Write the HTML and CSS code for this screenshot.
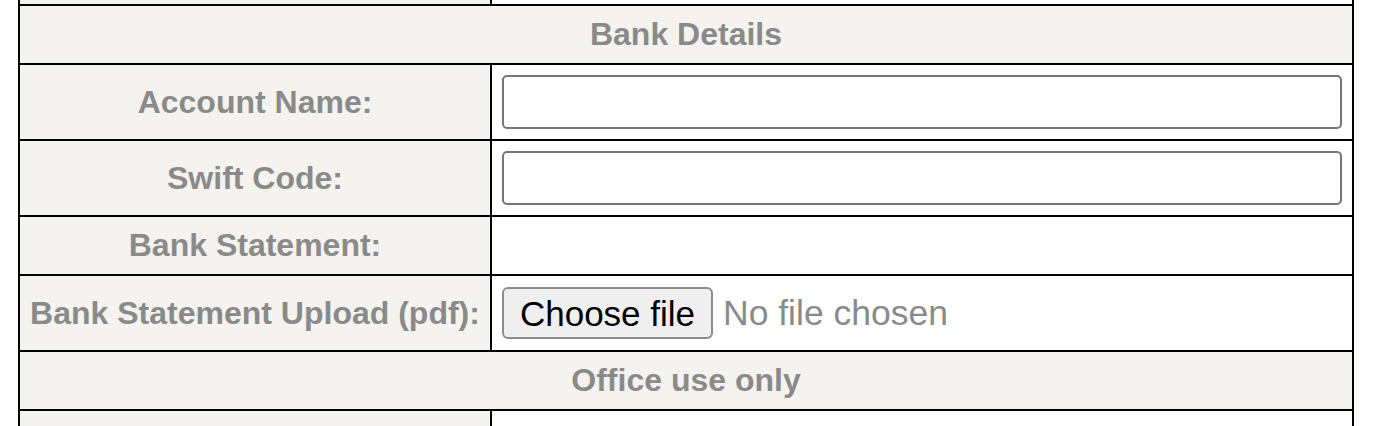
FILE: index.html
```html
<!DOCTYPE html>
<html>
<head>
<meta charset="utf-8">
<link rel="stylesheet" href="styles.css">
</head>
<body>
<div class="page">
  <div class="form-grid">
    <div class="cell label"></div>
    <div class="cell value"></div>

    <div class="cell section">Bank Details</div>

    <div class="cell label">Account Name:</div>
    <div class="cell value"><input class="text-input" type="text"></div>

    <div class="cell label">Swift Code:</div>
    <div class="cell value"><input class="text-input" type="text"></div>

    <div class="cell label">Bank Statement:</div>
    <div class="cell value"></div>

    <div class="cell label">Bank Statement Upload (pdf):</div>
    <div class="cell value">
      <div class="file-input">
        <button class="file-button" type="button">Choose file</button>
        <span class="file-status">No file chosen</span>
      </div>
    </div>

    <div class="cell section">Office use only</div>

    <div class="cell label"></div>
    <div class="cell value"></div>
  </div>
</div>
</body>
</html>
```

FILE: styles.css
```css
html, body {
  margin: 0;
  padding: 0;
  background: #ffffff;
  overflow: hidden;
}

.page {
  padding-left: 18px;
  height: 426px;
  overflow: hidden;
}

.form-grid {
  display: grid;
  grid-template-columns: 470px 860px;
  grid-template-rows: 4px 57px 74px 74px 57px 74px 57px 57px;
  gap: 2px;
  padding: 0 2px;
  width: 1332px;
  background: #000000;
  font-family: "Liberation Sans", Arial, Helvetica, sans-serif;
}

.cell {
  display: flex;
  align-items: center;
  box-sizing: border-box;
  min-height: 0;
  overflow: hidden;
}

.label {
  background: #f4f3ef;
  color: #8a8a8a;
  font-weight: bold;
  font-size: 32px;
  justify-content: center;
  text-align: center;
  padding: 0 10px;
  white-space: nowrap;
}

.value {
  background: #ffffff;
  padding: 0 10px;
}

.section {
  grid-column: 1 / span 2;
  background: #f4f3ef;
  color: #8a8a8a;
  font-weight: bold;
  font-size: 32px;
  justify-content: center;
}

.text-input {
  box-sizing: border-box;
  width: 840px;
  height: 54px;
  border: 2px solid #767676;
  border-radius: 5px;
  background: #ffffff;
  margin: 0;
  outline: none;
}

.file-input {
  display: flex;
  align-items: center;
  gap: 10px;
}

.file-button {
  box-sizing: border-box;
  width: 211px;
  height: 52px;
  margin: 0;
  padding: 0;
  border: 2px solid #8c8c8c;
  border-radius: 6px;
  background: #efefef;
  color: #000000;
  font-family: "Liberation Sans", Arial, sans-serif;
  font-size: 35px;
  line-height: 1;
}

.file-status {
  color: #8a8a8a;
  font-family: "Liberation Sans", Arial, sans-serif;
  font-size: 35.5px;
}
```
